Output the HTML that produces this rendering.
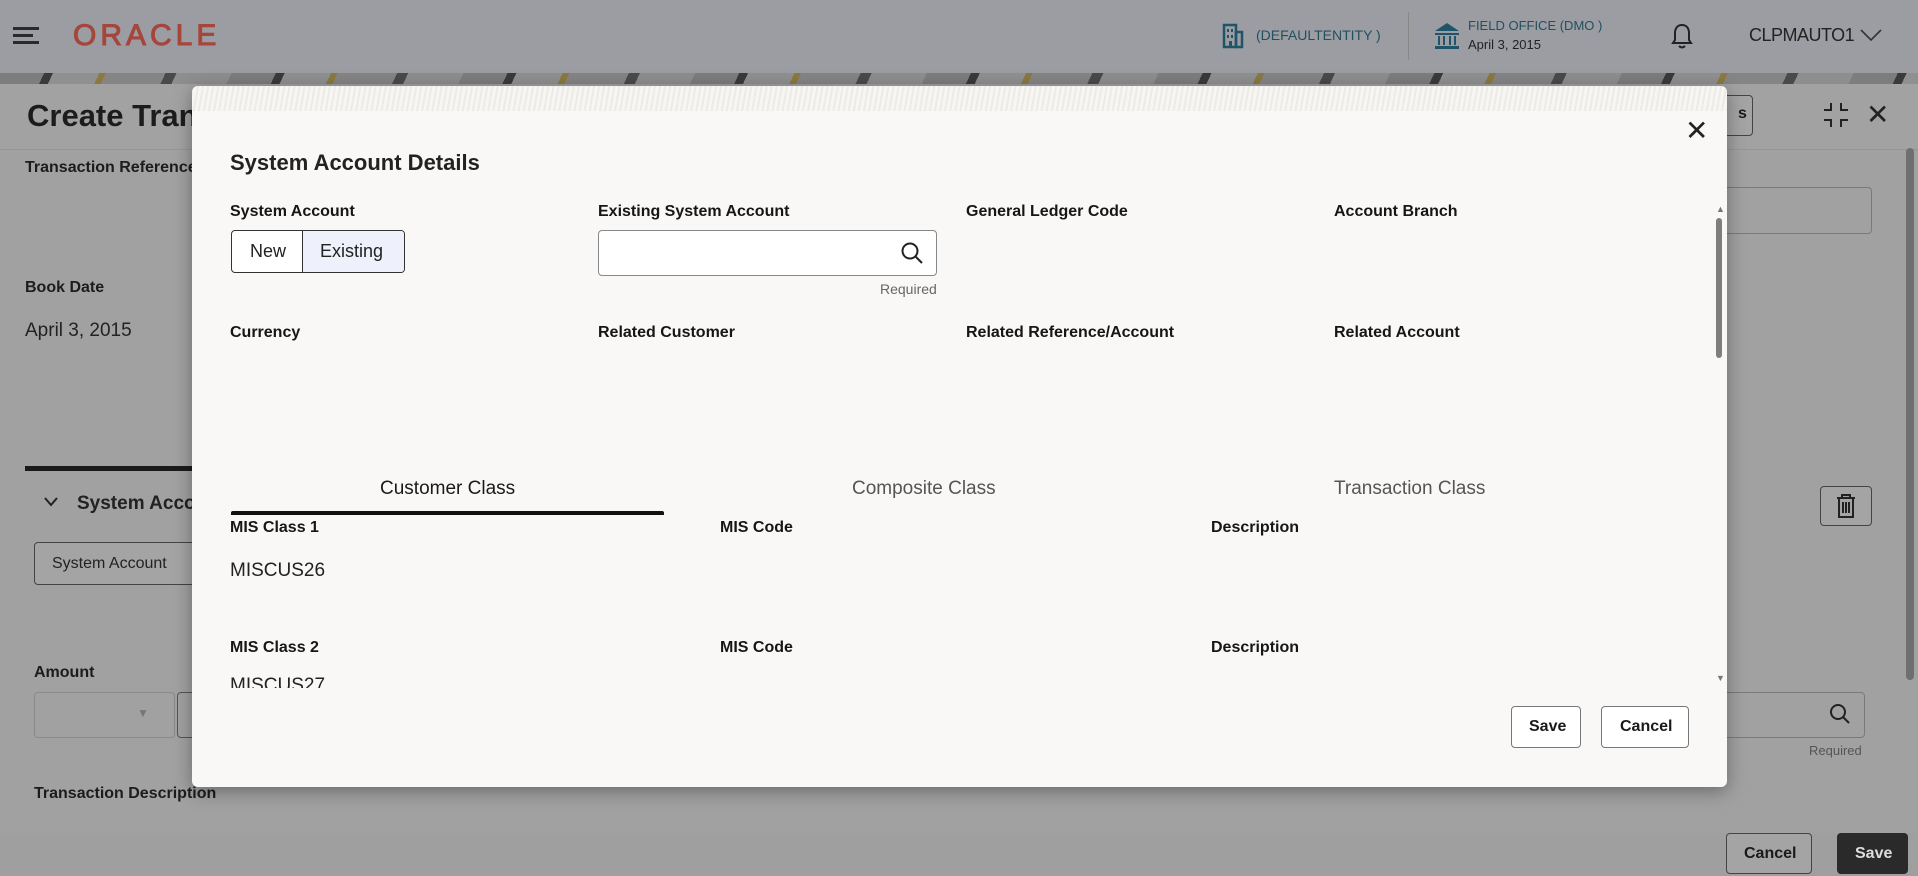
<!DOCTYPE html>
<html><head><meta charset="utf-8">
<style>
*{box-sizing:border-box;margin:0;padding:0}
body{width:1918px;height:876px;overflow:hidden;position:relative;background:#a3a3a3;font-family:"Liberation Sans",sans-serif;color:#1a1a1a}
.a{position:absolute;white-space:nowrap}
.hdr{left:0;top:0;width:1918px;height:73px;background:#9c9ca3}
.strip{left:0;top:73px;width:1918px;height:11px;background:repeating-linear-gradient(115deg,#7d7d7d 0 40px,#3a3a3a 40px 48px,#909090 48px 90px,#8a7a40 90px 96px,#858585 96px 150px,#4a4a4a 150px 160px,#8e8e8e 160px 210px)}
.page{left:0;top:84px;width:1918px;height:792px;background:#a1a1a1}
.bl{color:#1c1c1c;font-size:16px;font-weight:bold}
.btn{border:1px solid #444;border-radius:4px;background:#a4a4a4}
.modal{left:192px;top:86px;width:1535px;height:701px;background:#f9f8f6;border-radius:6px;box-shadow:0 4px 18px rgba(0,0,0,.35);overflow:hidden}
.mstrip{left:0;top:0;width:1535px;height:25px;background:repeating-linear-gradient(100deg,#ecebe8 0 2px,#f7f6f3 2px 5px)}
.ml{font-size:16px;font-weight:bold;color:#161616}
</style></head><body>
<div class="a hdr"></div>
<div class="a" style="left:13px;top:27px;width:26px;height:3px;background:#2a2a2a"></div>
<div class="a" style="left:13px;top:34px;width:20px;height:3px;background:#2a2a2a"></div>
<div class="a" style="left:13px;top:41px;width:26px;height:3px;background:#2a2a2a"></div>
<div class="a" style="left:73px;top:19px;font-size:30px;color:#a4463b;letter-spacing:4px;-webkit-text-stroke:1px #a4463b">ORACLE</div>
<svg class="a" style="left:1222px;top:23px" width="22" height="26" viewBox="0 0 22 26"><rect x="2" y="2" width="12" height="22" fill="none" stroke="#1f5566" stroke-width="2.5"/><rect x="14" y="9" width="6" height="15" fill="none" stroke="#1f5566" stroke-width="2.5"/><rect x="5" y="6" width="2" height="3" fill="#1f5566"/><rect x="9" y="6" width="2" height="3" fill="#1f5566"/><rect x="5" y="12" width="2" height="3" fill="#1f5566"/><rect x="9" y="12" width="2" height="3" fill="#1f5566"/><rect x="7" y="18" width="3" height="6" fill="#1f5566"/></svg>
<div class="a" style="left:1256px;top:27px;font-size:14px;color:#22505f">(DEFAULTENTITY )</div>
<div class="a" style="left:1408px;top:12px;width:1px;height:48px;background:#888"></div>
<svg class="a" style="left:1434px;top:22px" width="26" height="28" viewBox="0 0 26 28"><path d="M13 1L25 9H1Z" fill="#1f5566"/><rect x="1" y="11" width="24" height="2" fill="#1f5566"/><rect x="4" y="14" width="2" height="9" fill="#1f5566"/><rect x="9" y="14" width="2" height="9" fill="#1f5566"/><rect x="15" y="14" width="2" height="9" fill="#1f5566"/><rect x="20" y="14" width="2" height="9" fill="#1f5566"/><rect x="1" y="24" width="24" height="3" fill="#1f5566"/></svg>
<div class="a" style="left:1468px;top:18px;font-size:13px;color:#22505f">FIELD OFFICE (DMO )</div>
<div class="a" style="left:1468px;top:37px;font-size:13px;color:#222">April 3, 2015</div>
<svg class="a" style="left:1670px;top:22px" width="24" height="28" viewBox="0 0 24 28"><path d="M12 3C7 3 5 7 5 11V18L3 21H21L19 18V11C19 7 17 3 12 3Z" fill="none" stroke="#222" stroke-width="2"/><path d="M9 24Q12 27 15 24" fill="none" stroke="#222" stroke-width="2"/></svg>
<div class="a" style="left:1749px;top:25px;font-size:18px;color:#222;letter-spacing:-0.5px">CLPMAUTO1</div>
<svg class="a" style="left:1860px;top:28px" width="22" height="14" viewBox="0 0 22 14"><path d="M1 2L11 12L21 2" fill="none" stroke="#333" stroke-width="1.6"/></svg>
<div class="a strip"></div>
<div class="a page"></div>
<div class="a" style="left:0;top:84px;width:1918px;height:66px;background:#a2a2a2;border-bottom:1px solid #969696"></div>
<div class="a" style="left:27px;top:98px;font-size:31px;font-weight:bold;color:#1c1c1c">Create Transaction</div>
<div class="a btn" style="left:1690px;top:95px;width:63px;height:41px"></div>
<div class="a" style="left:1738px;top:105px;font-size:16px;font-weight:bold">s</div>
<svg class="a" style="left:1822px;top:102px" width="28" height="26" viewBox="0 0 28 26"><path d="M9 1V8H2M19 1V8H26M9 25V18H2M19 25V18H26" fill="none" stroke="#222" stroke-width="2"/></svg>
<div class="a" style="left:1866px;top:98px;font-size:28px;color:#222">✕</div>
<div class="a bl" style="left:25px;top:159px">Transaction Reference</div>
<div class="a bl" style="left:25px;top:279px">Book Date</div>
<div class="a" style="left:25px;top:320px;font-size:19px;color:#222">April 3, 2015</div>
<div class="a" style="left:1722px;top:187px;width:150px;height:47px;border:1px solid #7a7a7a;border-radius:4px"></div>
<div class="a" style="left:1906px;top:148px;width:8px;height:532px;background:#6f6f6f;border-radius:4px"></div>
<div class="a" style="left:25px;top:466px;width:170px;height:5px;background:#1a1a1a"></div>
<svg class="a" style="left:43px;top:496px" width="16" height="12" viewBox="0 0 16 12"><path d="M2 2L8 9L14 2" fill="none" stroke="#222" stroke-width="2"/></svg>
<div class="a" style="left:77px;top:493px;font-size:19px;font-weight:bold;color:#222">System Account</div>
<div class="a btn" style="left:1820px;top:486px;width:52px;height:40px"></div>
<svg class="a" style="left:1835px;top:493px" width="22" height="26" viewBox="0 0 22 26"><path d="M2 5H20M7 5V2H15V5M4 5V24H18V5M8 9V20M11 9V20M14 9V20" fill="none" stroke="#222" stroke-width="2"/></svg>
<div class="a btn" style="left:34px;top:542px;width:170px;height:43px"></div>
<div class="a" style="left:52px;top:555px;font-size:16px;color:#222">System Account</div>
<div class="a bl" style="left:34px;top:664px">Amount</div>
<div class="a" style="left:34px;top:692px;width:141px;height:46px;border:1px solid #8a8a8a;border-radius:4px"></div>
<div class="a" style="left:137px;top:706px;font-size:12px;color:#777">▼</div>
<div class="a" style="left:177px;top:692px;width:30px;height:46px;border:1px solid #555;border-radius:4px"></div>
<div class="a" style="left:1700px;top:692px;width:165px;height:46px;border:1px solid #7a7a7a;border-radius:4px"></div>
<svg class="a" style="left:1829px;top:703px" width="22" height="22" viewBox="0 0 22 22"><circle cx="9" cy="9" r="7" fill="none" stroke="#222" stroke-width="2"/><path d="M14 14L20 20" stroke="#222" stroke-width="2"/></svg>
<div class="a" style="left:1809px;top:743px;font-size:13px;color:#555">Required</div>
<div class="a bl" style="left:34px;top:785px">Transaction Description</div>
<div class="a" style="left:0;top:833px;width:1918px;height:43px;background:#9f9f9f"></div>
<div class="a btn" style="left:1726px;top:833px;width:86px;height:41px"></div>
<div class="a" style="left:1744px;top:845px;font-size:16px;font-weight:bold">Cancel</div>
<div class="a" style="left:1837px;top:833px;width:71px;height:41px;background:#2a2a2a;border-radius:4px"></div>
<div class="a" style="left:1855px;top:845px;font-size:16px;font-weight:bold;color:#ddd">Save</div>

<div class="a modal">
 <div class="a mstrip"></div>
 <div class="a" style="left:1493px;top:28px;font-size:28px;color:#222">✕</div>
 <div class="a" style="left:38px;top:64px;font-size:22px;font-weight:bold;color:#222">System Account Details</div>
 <div class="a ml" style="left:38px;top:117px">System Account</div>
 <div class="a ml" style="left:406px;top:117px">Existing System Account</div>
 <div class="a ml" style="left:774px;top:117px">General Ledger Code</div>
 <div class="a ml" style="left:1142px;top:117px">Account Branch</div>
 <div class="a" style="left:39px;top:144px;width:174px;height:43px;border:1.5px solid #333;border-radius:4px;overflow:hidden;background:#fff">
   <div class="a" style="left:70px;top:0;width:104px;height:43px;background:#eef1fb;border-left:1.5px solid #333"></div>
   <div class="a" style="left:18px;top:10px;font-size:18px;color:#222">New</div>
   <div class="a" style="left:88px;top:10px;font-size:18px;color:#222">Existing</div>
 </div>
 <div class="a" style="left:406px;top:144px;width:339px;height:46px;border:1px solid #888;border-radius:4px;background:#fff"></div>
 <svg class="a" style="left:708px;top:155px" width="24" height="24" viewBox="0 0 24 24"><circle cx="10" cy="10" r="7.5" fill="none" stroke="#222" stroke-width="2"/><path d="M15.5 15.5L22 22" stroke="#222" stroke-width="2"/></svg>
 <div class="a" style="left:688px;top:195px;font-size:14px;color:#666">Required</div>
 <div class="a ml" style="left:38px;top:238px">Currency</div>
 <div class="a ml" style="left:406px;top:238px">Related Customer</div>
 <div class="a ml" style="left:774px;top:238px">Related Reference/Account</div>
 <div class="a ml" style="left:1142px;top:238px">Related Account</div>
 <div class="a" style="left:188px;top:392px;font-size:19px;color:#1a1a1a">Customer Class</div>
 <div class="a" style="left:660px;top:392px;font-size:19px;color:#555">Composite Class</div>
 <div class="a" style="left:1142px;top:392px;font-size:19px;color:#555">Transaction Class</div>
 <div class="a" style="left:39px;top:425px;width:433px;height:4px;background:#111;border-radius:2px 2px 0 0"></div>
 <div class="a" style="left:38px;top:431px;width:1480px;height:171px;overflow:hidden">
  <div class="a ml" style="left:0;top:2px">MIS Class 1</div>
  <div class="a ml" style="left:490px;top:2px">MIS Code</div>
  <div class="a ml" style="left:981px;top:2px">Description</div>
  <div class="a" style="left:0;top:43px;font-size:19px;color:#222">MISCUS26</div>
  <div class="a ml" style="left:0;top:122px">MIS Class 2</div>
  <div class="a ml" style="left:490px;top:122px">MIS Code</div>
  <div class="a ml" style="left:981px;top:122px">Description</div>
  <div class="a" style="left:0;top:158px;font-size:19px;color:#222">MISCUS27</div>
 </div>
 <div class="a" style="left:1524px;top:118px;font-size:9px;color:#777">▲</div>
 <div class="a" style="left:1524px;top:132px;width:6px;height:140px;background:#7e7e7e;border-radius:3px"></div>
 <div class="a" style="left:1524px;top:587px;font-size:9px;color:#777">▼</div>
 <div class="a" style="left:1319px;top:620px;width:70px;height:42px;border:1px solid #777;border-radius:4px;background:#fff"></div>
 <div class="a" style="left:1337px;top:632px;font-size:16px;font-weight:bold">Save</div>
 <div class="a" style="left:1409px;top:620px;width:88px;height:42px;border:1px solid #777;border-radius:4px;background:#fff"></div>
 <div class="a" style="left:1428px;top:632px;font-size:16px;font-weight:bold">Cancel</div>
</div>
</body></html>
